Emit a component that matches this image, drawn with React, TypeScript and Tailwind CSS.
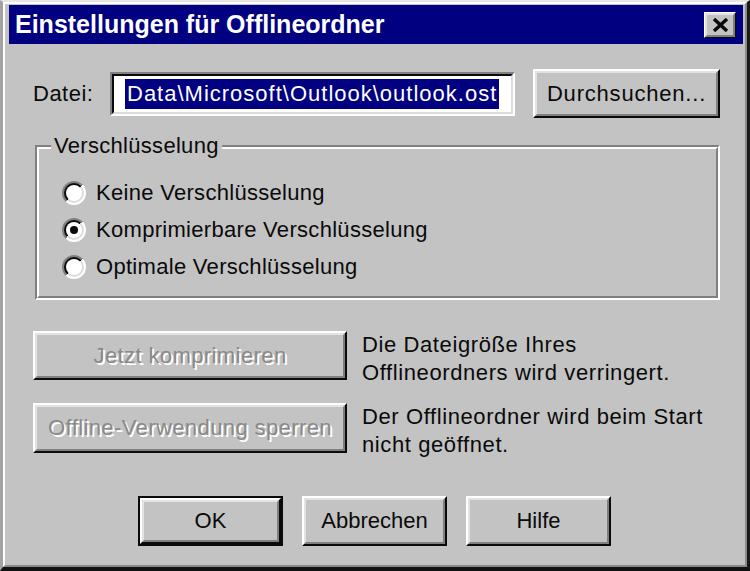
import React from "react";

function Raised({
  children,
  className = "",
  def = false,
}: {
  children?: React.ReactNode;
  className?: string;
  def?: boolean;
}) {
  const body = (
    <div className="h-full w-full border-2 border-t-white border-l-white border-r-[#0a0a0a] border-b-[#0a0a0a]">
      <div className="flex h-full w-full items-center justify-center border-2 border-t-[#e2e2e2] border-l-[#e2e2e2] border-r-[#808080] border-b-[#808080]">
        {children}
      </div>
    </div>
  );
  if (def) {
    return <div className={`border-2 border-[#0a0a0a] ${className}`}>{body}</div>;
  }
  return <div className={className}>{body}</div>;
}

function Radio({ checked, id }: { checked?: boolean; id: string }) {
  return (
    <svg width="24" height="24" viewBox="0 0 24 24" className="shrink-0">
      <defs>
        <linearGradient id={`o${id}`} x1="0" y1="0" x2="1" y2="1">
          <stop offset="0.5" stopColor="#808080" />
          <stop offset="0.5" stopColor="#ffffff" />
        </linearGradient>
        <linearGradient id={`i${id}`} x1="0" y1="0" x2="1" y2="1">
          <stop offset="0.5" stopColor="#0a0a0a" />
          <stop offset="0.5" stopColor="#dcdcdc" />
        </linearGradient>
      </defs>
      <circle cx="12" cy="12" r="12" fill={`url(#o${id})`} />
      <circle cx="12" cy="12" r="10" fill={`url(#i${id})`} />
      <circle cx="12" cy="12" r="8" fill="#ffffff" />
      {checked && <circle cx="12" cy="12" r="4" fill="#0a0a0a" />}
    </svg>
  );
}

export default function App() {
  const disabledText =
    "text-[#8a8a8a] [text-shadow:2px_2px_0_#ffffff] text-[22px] leading-none tracking-[0.4px]";
  return (
    <div className="h-[571px] w-[750px] overflow-hidden font-['Liberation_Sans',Arial,sans-serif] text-[#0a0a0a]">
      <div className="flex h-full w-full flex-col border-t-[2px] border-l-[3px] border-r-[3px] border-b-[4px] border-t-[#e6e6e6] border-l-[#a2a2a2] border-r-[#1a1a1a] border-b-[#111111] bg-[#c3c3c3]">
        <div className="flex flex-1 flex-col border-2 border-t-white border-l-white border-r-[#8a8a8a] border-b-[#8a8a8a] pl-[4px] pr-[2px] pt-[1px]">
          {/* Title bar */}
          <div className="flex h-[39px] shrink-0 items-center justify-between bg-[#000080] pl-[6px] pr-[7px]">
            <span className="text-[25px] font-bold leading-none text-white">
              Einstellungen für Offlineordner
            </span>
            <div className="h-[26px] w-[32px] border border-t-white border-l-white border-r-[#0a0a0a] border-b-[#0a0a0a]">
              <div className="flex h-full w-full items-center justify-center border-2 border-t-[#e2e2e2] border-l-[#e2e2e2] border-r-[#808080] border-b-[#808080] bg-[#c3c3c3]">
                <svg width="17" height="14" viewBox="0 0 17 14">
                  <path d="M2 1 L15 13 M15 1 L2 13" stroke="#0a0a0a" strokeWidth="3.4" />
                </svg>
              </div>
            </div>
          </div>

          {/* Datei row */}
          <div className="mt-[25px] flex h-[49px] shrink-0 items-center pl-[24px]">
            <span className="w-[77px] text-[22px] leading-none tracking-[0.5px]">Datei:</span>
            <div className="h-[44px] w-[405px] border-2 border-t-[#808080] border-l-[#808080] border-r-white border-b-white">
              <div className="flex h-full w-full items-center border-2 border-t-[#0a0a0a] border-l-[#0a0a0a] border-r-[#dcdcdc] border-b-[#dcdcdc] bg-white pl-[11px]">
                <span className="flex h-[30px] items-center whitespace-nowrap bg-[#000080] px-[2px] text-[22px] leading-none tracking-[1px] text-white">
                  Data\Microsoft\Outlook\outlook.ost
                </span>
              </div>
            </div>
            <Raised className="ml-[18px] h-[49px] w-[187px]">
              <span className="text-[22px] leading-none tracking-[0.8px]">Durchsuchen...</span>
            </Raised>
          </div>

          {/* Group box */}
          <div className="relative ml-[26px] mt-[27px] h-[155px] w-[685px] shrink-0 border-2 border-t-[#808080] border-l-[#808080] border-r-white border-b-white">
            <div className="h-full w-full border-2 border-t-white border-l-white border-r-[#808080] border-b-[#808080] pl-[23px] pt-[25px]">
              <div className="flex flex-col">
                {[
                  { t: "Keine Verschlüsselung", c: false },
                  { t: "Komprimierbare Verschlüsselung", c: true },
                  { t: "Optimale Verschlüsselung", c: false },
                ].map((r, i) => (
                  <div key={i} className="flex h-[37px] items-center gap-[10px]">
                    <Radio checked={r.c} id={`r${i}`} />
                    <span className="text-[22px] leading-none tracking-[0.3px]">{r.t}</span>
                  </div>
                ))}
              </div>
            </div>
            <span className="absolute -top-[13px] left-[14px] bg-[#c3c3c3] px-[3px] text-[22px] leading-[24px] tracking-[0.3px]">
              Verschlüsselung
            </span>
          </div>

          {/* Action rows */}
          <div className="mt-[31px] flex h-[49px] shrink-0 pl-[24px]">
            <Raised className="h-[49px] w-[314px] shrink-0">
              <span className={disabledText}>Jetzt komprimieren</span>
            </Raised>
            <div className="ml-[15px] whitespace-nowrap text-[22px] leading-[28px] tracking-[0.6px]">
              <div>Die Dateigröße Ihres</div>
              <div>Offlineordners wird verringert.</div>
            </div>
          </div>
          <div className="mt-[23px] flex h-[50px] shrink-0 pl-[24px]">
            <Raised className="h-[50px] w-[314px] shrink-0">
              <span className={disabledText}>Offline-Verwendung sperren</span>
            </Raised>
            <div className="ml-[15px] whitespace-nowrap text-[22px] leading-[28px] tracking-[0.6px]">
              <div>Der Offlineordner wird beim Start</div>
              <div>nicht geöffnet.</div>
            </div>
          </div>

          {/* Bottom buttons */}
          <div className="mt-[43px] flex shrink-0 gap-[19px] pl-[129px]">
            <Raised def className="h-[50px] w-[145px]">
              <span className="text-[22px] leading-none">OK</span>
            </Raised>
            <Raised className="h-[50px] w-[145px]">
              <span className="text-[22px] leading-none">Abbrechen</span>
            </Raised>
            <Raised className="h-[50px] w-[145px]">
              <span className="text-[22px] leading-none">Hilfe</span>
            </Raised>
          </div>
        </div>
      </div>
    </div>
  );
}
